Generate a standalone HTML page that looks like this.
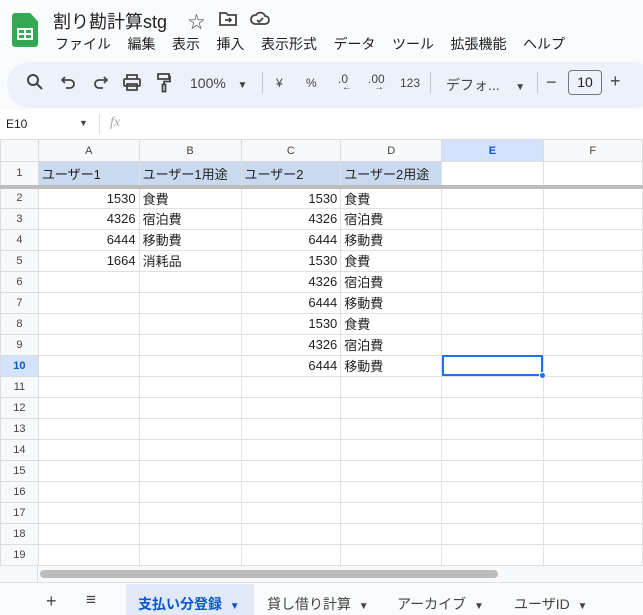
<!DOCTYPE html>
<html><head><meta charset="utf-8"><style>
*{margin:0;padding:0;box-sizing:border-box}
body{width:643px;height:615px;overflow:hidden;background:#f9fbfd;font-family:"Liberation Sans","Noto Sans CJK JP",sans-serif;color:#1f1f1f;position:relative}
.a{position:absolute;white-space:nowrap}
.menu span{margin-right:16.5px}
table{position:absolute;left:0;top:139px;border-collapse:collapse;table-layout:fixed;background:#fff}
td{border:1px solid #e1e1e1;height:21px;font-size:13px;padding:0 3px;overflow:hidden;white-space:nowrap}
td.h{background:#f8f9fa;color:#444;font-size:11px;text-align:center;border-color:#dadce0}
td.n{text-align:right}
tr.hd td{height:22px;background:#f8f9fa;text-align:center;font-size:11px;color:#444;border-color:#dadce0}
tr.r1 td{height:25px;border-bottom:4px solid #bdbdbd}
tr.r1 td.b{background:#c9daf0}
.ic{position:absolute;top:74px;font-size:14px;color:#444}
svg.s{position:absolute;top:73px}
</style></head><body>
<div class="a" style="left:12px;top:13px;width:26px;height:34px;background:#34a853;border-radius:3px;clip-path:polygon(0 0,70% 0,100% 25%,100% 100%,0 100%)"></div>
<div class="a" style="left:17px;top:28px;width:16px;height:12px;border:2px solid #fff;background:linear-gradient(#fff,#fff) 50% 0/2px 100% no-repeat,linear-gradient(#fff,#fff) 0 50%/100% 2px no-repeat"></div>
<div class="a" style="left:53px;top:8px;font-size:18px">割り勘計算stg</div>
<div class="a" style="left:188px;top:8px;font-size:17px;color:#444">☆</div>
<svg class="a" style="left:219px;top:11px" width="18" height="15" viewBox="0 0 18 15" fill="none" stroke="#444" stroke-width="1.8"><path d="M1 2h6l2 2h8v10H1z"/><path d="M6 9h6M10 7l2 2-2 2"/></svg>
<svg class="a" style="left:250px;top:11px" width="20" height="15" viewBox="0 0 20 15" fill="none" stroke="#444" stroke-width="1.8"><path d="M5 13h10a4 4 0 0 0 0-8 5 5 0 0 0-9-1 4.5 4.5 0 0 0-1 9z"/><path d="M7 9l2 2 4-4"/></svg>
<div class="a menu" style="left:55px;top:34px;font-size:14px"><span>ファイル</span><span>編集</span><span>表示</span><span>挿入</span><span>表示形式</span><span>データ</span><span>ツール</span><span>拡張機能</span><span>ヘルプ</span></div>
<div class="a" style="left:7px;top:62px;width:650px;height:46px;background:#edf2fa;border-radius:23px"></div>
<svg class="s" style="left:26px" width="18" height="18" viewBox="0 0 18 18" fill="none" stroke="#444" stroke-width="2"><circle cx="7" cy="7" r="5"/><path d="M11 11l5 5"/></svg>
<svg class="s" style="left:61px;top:75px" width="16" height="16" viewBox="0 0 16 16" fill="none" stroke="#444" stroke-width="1.8"><path d="M4 2L1 5l3 3"/><path d="M1 5h8a4 4 0 0 1 0 8H5"/></svg>
<svg class="s" style="left:92px;top:75px" width="16" height="16" viewBox="0 0 16 16" fill="none" stroke="#444" stroke-width="1.8"><path d="M12 2l3 3-3 3"/><path d="M15 5H7a4 4 0 0 0 0 8h4"/></svg>
<svg class="s" style="left:123px;top:74px" width="18" height="17" viewBox="0 0 18 17" fill="none" stroke="#444" stroke-width="1.8"><path d="M4 5V1h10v4"/><rect x="1" y="5" width="16" height="7" rx="1"/><path d="M4 10h10v6H4z"/></svg>
<svg class="s" style="left:157px;top:73px" width="14" height="20" viewBox="0 0 14 20" fill="none" stroke="#444" stroke-width="1.8"><rect x="1" y="1" width="11" height="5"/><path d="M12 3.5h1v5H7v3"/><rect x="5.5" y="11.5" width="3" height="7"/></svg>
<div class="ic" style="left:190px;top:75px;font-size:14px">100%&nbsp;&nbsp;&nbsp;<span style="font-size:10px">▼</span></div>
<div class="a" style="left:262px;top:72px;width:1px;height:22px;background:#c7c7c7"></div>
<div class="ic" style="left:276px;top:76px;font-size:12px">¥</div>
<div class="ic" style="left:306px;top:76px;font-size:12px">%</div>
<div class="ic" style="left:338px;top:72px;font-size:12px">.0<span style="position:absolute;left:4px;top:10px;font-size:10px">←</span></div>
<div class="ic" style="left:368px;top:72px;font-size:12px">.00<span style="position:absolute;left:6px;top:10px;font-size:10px">→</span></div>
<div class="ic" style="left:400px;top:76px;font-size:12px">123</div>
<div class="a" style="left:430px;top:72px;width:1px;height:22px;background:#c7c7c7"></div>
<div class="ic" style="left:446px;top:75px">デフォ...&nbsp;&nbsp;&nbsp;&nbsp;<span style="font-size:10px">▼</span></div>
<div class="a" style="left:537px;top:72px;width:1px;height:22px;background:#c7c7c7"></div>
<div class="ic" style="left:546px;top:72px;font-size:18px">−</div>
<div class="a" style="left:568px;top:70px;width:34px;height:25px;border:1px solid #747775;border-radius:4px;font-size:14px;text-align:center;line-height:23px">10</div>
<div class="ic" style="left:610px;top:71px;font-size:18px">+</div>
<div class="a" style="left:0;top:110px;width:643px;height:29px;background:#fff"></div>
<div class="a" style="left:6px;top:117px;font-size:12px">E10</div>
<div class="a" style="left:79px;top:118px;font-size:9px;color:#444">▼</div>
<div class="a" style="left:99px;top:114px;width:1px;height:20px;background:#ddd"></div>
<div class="a" style="left:110px;top:115px;font-size:14px;color:#aaa;font-style:italic;font-family:'Liberation Serif',serif">fx</div>
<table>
<colgroup><col style="width:38px"><col style="width:101px"><col style="width:102px"><col style="width:100px"><col style="width:101px"><col style="width:102px"><col style="width:100px"></colgroup>
<tr class="hd"><td></td><td>A</td><td>B</td><td>C</td><td>D</td><td style="background:#d3e3fd;font-weight:bold;color:#0b57d0">E</td><td>F</td></tr>
<tr class="r1"><td class="h">1</td><td class="b">ユーザー1</td><td class="b">ユーザー1用途</td><td class="b">ユーザー2</td><td class="b">ユーザー2用途</td><td></td><td></td></tr>
<tr><td class="h">2</td><td class="n">1530</td><td>食費</td><td class="n">1530</td><td>食費</td><td></td><td></td></tr>
<tr><td class="h">3</td><td class="n">4326</td><td>宿泊費</td><td class="n">4326</td><td>宿泊費</td><td></td><td></td></tr>
<tr><td class="h">4</td><td class="n">6444</td><td>移動費</td><td class="n">6444</td><td>移動費</td><td></td><td></td></tr>
<tr><td class="h">5</td><td class="n">1664</td><td>消耗品</td><td class="n">1530</td><td>食費</td><td></td><td></td></tr>
<tr><td class="h">6</td><td></td><td></td><td class="n">4326</td><td>宿泊費</td><td></td><td></td></tr>
<tr><td class="h">7</td><td></td><td></td><td class="n">6444</td><td>移動費</td><td></td><td></td></tr>
<tr><td class="h">8</td><td></td><td></td><td class="n">1530</td><td>食費</td><td></td><td></td></tr>
<tr><td class="h">9</td><td></td><td></td><td class="n">4326</td><td>宿泊費</td><td></td><td></td></tr>
<tr><td class="h" style="background:#d3e3fd;font-weight:bold;color:#0b57d0">10</td><td></td><td></td><td class="n">6444</td><td>移動費</td><td style="outline:2px solid #1a73e8;outline-offset:-2px"></td><td></td></tr>
<tr><td class="h">11</td><td></td><td></td><td></td><td></td><td></td><td></td></tr>
<tr><td class="h">12</td><td></td><td></td><td></td><td></td><td></td><td></td></tr>
<tr><td class="h">13</td><td></td><td></td><td></td><td></td><td></td><td></td></tr>
<tr><td class="h">14</td><td></td><td></td><td></td><td></td><td></td><td></td></tr>
<tr><td class="h">15</td><td></td><td></td><td></td><td></td><td></td><td></td></tr>
<tr><td class="h">16</td><td></td><td></td><td></td><td></td><td></td><td></td></tr>
<tr><td class="h">17</td><td></td><td></td><td></td><td></td><td></td><td></td></tr>
<tr><td class="h">18</td><td></td><td></td><td></td><td></td><td></td><td></td></tr>
<tr><td class="h">19</td><td></td><td></td><td></td><td></td><td></td><td></td></tr>
</table>
<div class="a" style="left:539px;top:372px;width:7px;height:7px;border-radius:50%;background:#1a73e8;border:1px solid #fff"></div>
<div class="a" style="left:0;top:565px;width:643px;height:18px;background:#f8f9fa;border-top:1px solid #e1e1e1;border-bottom:1px solid #e1e1e1"></div>
<div class="a" style="left:37px;top:565px;width:1px;height:18px;background:#ddd"></div>
<div class="a" style="left:40px;top:570px;width:458px;height:8px;background:#bcbcbc;border-radius:4px"></div>
<div class="a" style="left:46px;top:591px;font-size:18px;color:#444">+</div>
<div class="a" style="left:86px;top:590px;font-size:17px;color:#444">≡</div>
<div class="a" style="left:126px;top:584px;width:128px;height:31px;background:#e1e9f7"></div>
<div class="a" style="left:138px;top:594px;font-size:14px;font-weight:bold;color:#0b57d0">支払い分登録&nbsp;&nbsp;<span style="font-size:10px">▼</span></div>
<div class="a" style="left:267px;top:594px;font-size:14px;color:#444">貸し借り計算&nbsp;&nbsp;<span style="font-size:10px">▼</span></div>
<div class="a" style="left:397px;top:594px;font-size:14px;color:#444">アーカイブ&nbsp;&nbsp;<span style="font-size:10px">▼</span></div>
<div class="a" style="left:514px;top:594px;font-size:14px;color:#444">ユーザID&nbsp;&nbsp;<span style="font-size:10px">▼</span></div>
</body></html>
